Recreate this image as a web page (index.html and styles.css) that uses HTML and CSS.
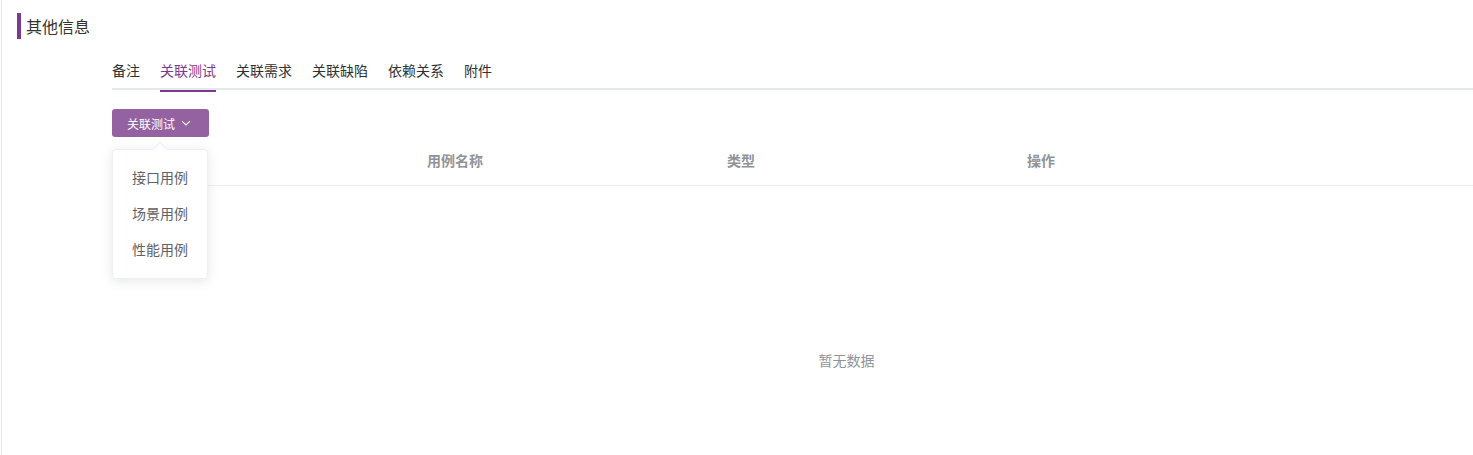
FILE: index.html
```html
<!DOCTYPE html>
<html lang="zh-CN">
<head>
<meta charset="utf-8">
<link rel="stylesheet" href="styles.css">
</head>
<body>
<div class="page">
  <div class="section-title"><span class="title-bar"></span><span class="title-text">其他信息</span></div>
  <div class="content">
    <div class="tabs">
      <div class="tab">备注</div>
      <div class="tab active">关联测试</div>
      <div class="tab">关联需求</div>
      <div class="tab">关联缺陷</div>
      <div class="tab">依赖关系</div>
      <div class="tab">附件</div>
    </div>
    <div class="toolbar">
      <button class="btn">关联测试<svg class="chev" viewBox="0 0 12 12" width="12" height="12"><path d="M2 4.2 L6 8 L10 4.2" fill="none" stroke="#fff" stroke-width="1.1"/></svg></button>
      <div class="dropdown">
        <span class="arrow"></span>
        <div class="dd-item">接口用例</div>
        <div class="dd-item">场景用例</div>
        <div class="dd-item">性能用例</div>
      </div>
    </div>
    <div class="table">
      <div class="thead">
        <div class="th"></div>
        <div class="th">用例名称</div>
        <div class="th">类型</div>
        <div class="th">操作</div>
      </div>
      <div class="empty"><span>暂无数据</span></div>
    </div>
  </div>
</div>
</body>
</html>
```

FILE: styles.css
```css
* { box-sizing: border-box; }
html, body { margin: 0; padding: 0; background: #fff; overflow: hidden; }
body {
  font-family: "Noto Sans CJK SC", "Microsoft YaHei", sans-serif;
  color: #303133;
}
.page {
  width: 1472px;
  height: 455px;
  margin-left: 1px;
  border-left: 1px solid #e6e6e6;
  position: relative;
  overflow: hidden;
}
.section-title {
  display: flex;
  align-items: center;
  padding: 13px 0 0 15px;
  height: 39px;
}
.title-bar {
  width: 4px;
  height: 26px;
  background: #7b3a8f;
}
.title-text {
  margin-left: 5px;
  font-size: 16px;
  color: #333;
  line-height: 26px;
}
.content {
  padding-left: 110px;
}
.tabs {
  display: flex;
  gap: 20px;
  margin-top: 11px;
  height: 40px;
  border-bottom: 2px solid #e4e7ed;
}
.tab {
  font-size: 14px;
  line-height: 40px;
  color: #303133;
  height: 40px;
  position: relative;
}
.tab.active {
  color: #7b3a8f;
}
.tab.active::after {
  content: "";
  position: absolute;
  left: 0;
  right: 0;
  bottom: -2px;
  height: 2px;
  background: #7b3a8f;
}
.toolbar {
  position: relative;
  padding-top: 19px;
  height: 48px;
}
.btn {
  display: flex;
  align-items: center;
  height: 28px;
  width: 97px;
  padding: 0 0 0 15px;
  border: none;
  border-radius: 3px;
  background: #9462a0;
  color: #fff;
  font-family: inherit;
  font-size: 12px;
  cursor: pointer;
}
.chev { margin-left: 5px; }
.dropdown {
  position: absolute;
  left: 0;
  top: 59px;
  width: 96px;
  padding: 9px 0 11px;
  background: #fff;
  border: 1px solid #ebeef5;
  border-radius: 4px;
  box-shadow: 0 2px 12px 0 rgba(0,0,0,0.1);
  z-index: 5;
}
.arrow {
  position: absolute;
  top: -6px;
  left: 42px;
  width: 10px;
  height: 10px;
  background: #fff;
  border-left: 1px solid #ebeef5;
  border-top: 1px solid #ebeef5;
  transform: rotate(45deg);
}
.dd-item {
  height: 36px;
  line-height: 36px;
  padding-left: 19px;
  font-size: 14px;
  color: #606266;
  position: relative;
}
.table {
  width: 1361px;
}
.thead {
  display: grid;
  grid-template-columns: 305px 300px 300px 1fr;
  height: 48px;
  border-bottom: 1px solid #ebeef5;
  align-items: center;
}
.th {
  padding-left: 10px;
  padding-bottom: 3px;
  font-size: 14px;
  font-weight: bold;
  color: #909399;
}
.empty {
  height: 348px;
  display: flex;
  align-items: center;
  justify-content: center;
  padding-left: 108px;
  font-size: 14px;
  color: #909399;
}
```
